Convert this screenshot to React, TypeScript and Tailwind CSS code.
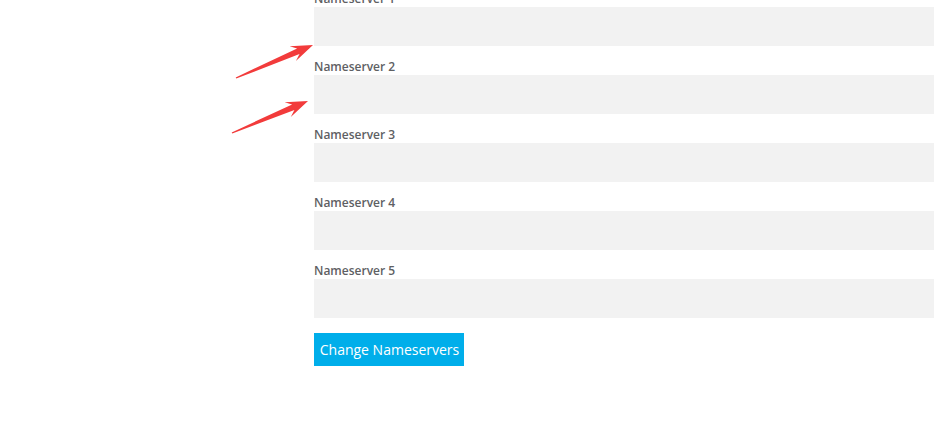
import React from "react";

// arrow polygon from tail to tip, tapered shaft + head
const arrowPoints = (tx: number, ty: number, hx: number, hy: number) => {
  const dx = hx - tx;
  const dy = hy - ty;
  const len = Math.hypot(dx, dy);
  const ux = dx / len;
  const uy = dy / len;
  const nx = -uy;
  const ny = ux;
  const headLen = 22;
  const headW = 8;
  const bx = hx - ux * headLen;
  const by = hy - uy * headLen;
  const sx = hx - ux * 16;
  const sy = hy - uy * 16;
  const p = (x: number, y: number) => `${x.toFixed(1)},${y.toFixed(1)}`;
  return [
    p(tx + nx * 0.7, ty + ny * 0.7),
    p(sx + nx * 3, sy + ny * 3),
    p(bx + nx * headW, by + ny * headW),
    p(hx, hy),
    p(bx - nx * headW, by - ny * headW),
    p(sx - nx * 3, sy - ny * 3),
    p(tx - nx * 0.7, ty - ny * 0.7),
  ].join(" ");
};

const servers = [1, 2, 3, 4, 5];

export default function App() {
  return (
    <div className="relative w-[934px] h-[448px] bg-white overflow-hidden font-['Open_Sans',sans-serif]">
      {/* ===== FORM ===== */}
      <div className="flex flex-col pl-[314px] mt-[-10px]">
        {servers.map((n) => (
          <div key={n} className="flex flex-col mb-[12px]">
            <label className="text-[12px] leading-[17px] font-semibold text-[#5e6063]">
              Nameserver {n}
            </label>
            <input className="h-[39px] w-full bg-[#f2f2f2] outline-none border-0 px-3 text-sm" />
          </div>
        ))}
        <div className="mt-[3px]">
          <button className="h-[33px] w-[150px] bg-[#00aeea] text-white text-[14px] leading-[33px] pl-[1px]">
            Change Nameservers
          </button>
        </div>
      </div>
      {/* ===== FORM END ===== */}

      {/* ===== ANNOTATION ARROWS ===== */}
      <svg className="absolute left-0 top-0 pointer-events-none" width="934" height="448">
        <polygon points={arrowPoints(236, 78, 313, 45)} fill="#f23b3b" />
        <polygon points={arrowPoints(232, 133, 308, 101)} fill="#f23b3b" />
      </svg>
    </div>
  );
}
